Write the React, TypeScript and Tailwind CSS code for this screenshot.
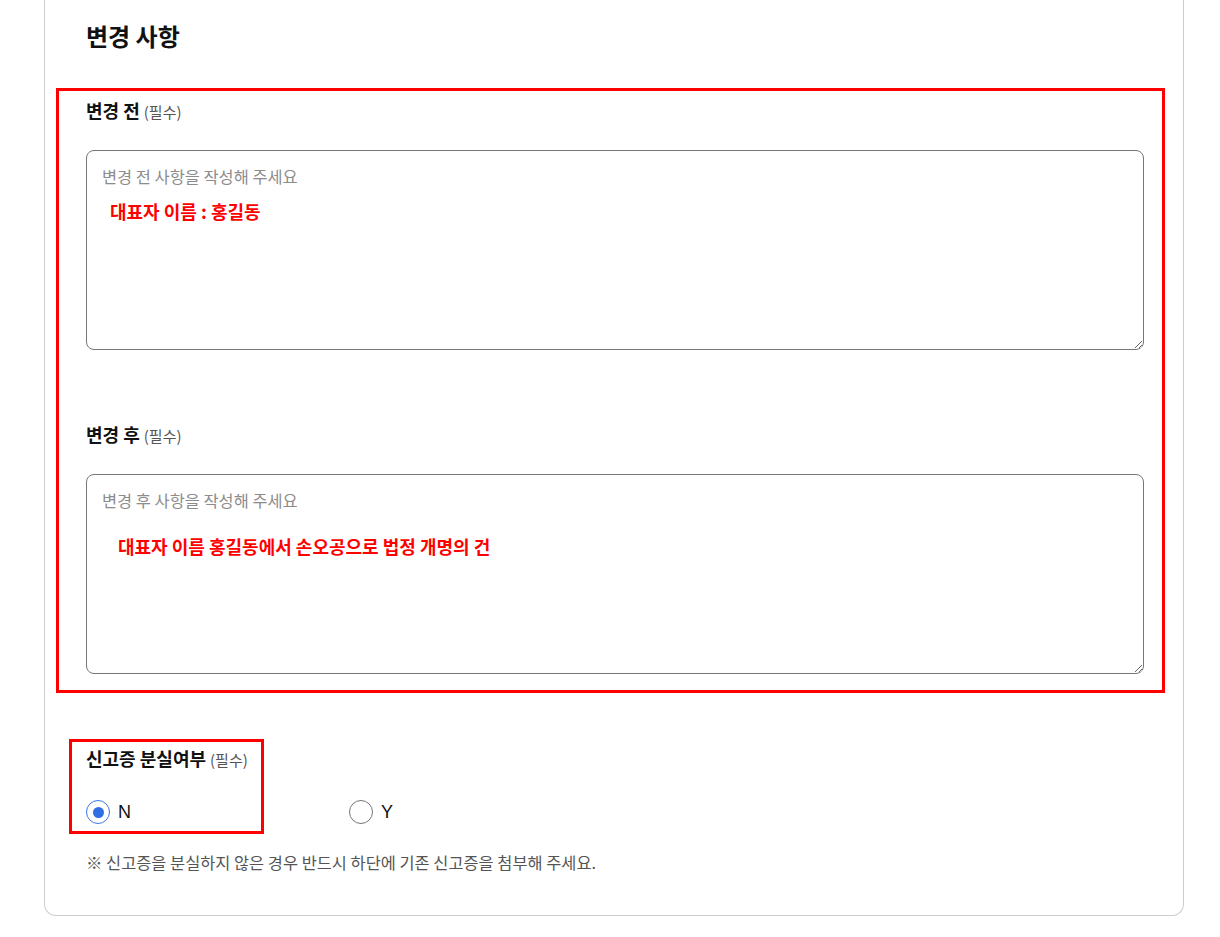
import React from 'react';

const fields = [
  {
    label: '변경 전',
    placeholder: '변경 전 사항을 작성해 주세요',
    note: '대표자 이름 : 홍길동',
    noteClass: 'left-[24px] top-[49px]',
  },
  {
    label: '변경 후',
    placeholder: '변경 후 사항을 작성해 주세요',
    note: '대표자 이름 홍길동에서 손오공으로 법정 개명의 건',
    noteClass: 'left-[32px] top-[60px]',
  },
];

function FieldLabel({ text }: { text: string }) {
  return (
    <div className="flex h-[24px] items-baseline gap-[4px] overflow-visible leading-[24px]">
      <span className="text-[18px] font-bold text-[#111]">{text}</span>
      <span className="text-[15px] text-[#555]">(필수)</span>
    </div>
  );
}

function Radio({ checked, label }: { checked?: boolean; label: string }) {
  return (
    <label className="flex h-[24px] items-center gap-[8px] cursor-pointer">
      <span
        className={`flex h-[24px] w-[24px] items-center justify-center rounded-full border-[1.5px] ${
          checked ? 'border-[#3a78e6]' : 'border-[#767676]'
        }`}
      >
        {checked && <span className="h-[11px] w-[11px] rounded-full bg-[#2f6fe4]" />}
      </span>
      <span className="font-['Liberation_Sans',sans-serif] text-[18px] leading-[24px] text-[#111]">{label}</span>
    </label>
  );
}

export default function App() {
  return (
    <div className="min-h-[937px] bg-white font-['Noto_Sans_CJK_KR','Noto_Sans',sans-serif]">
      <div className="ml-[44px] w-[1140px] rounded-b-[12px] border-x border-b border-[#cccccc] pl-[41px] pr-[39px] pt-[20px] pb-[42px]">
        <h2 className="h-[32px] text-[24px] font-bold leading-[32px] text-[#111]">변경 사항</h2>

        {/* 필수 입력 영역 */}
        <div className="-ml-[30px] -mr-[21px] mt-[36px] border-[3px] border-[#ff0000] pl-[27px] pr-[18px] pt-[7px] pb-[16px]">
          {fields.map((f, i) => (
            <div key={f.label} className={i > 0 ? 'mt-[72px]' : ''}>
              <FieldLabel text={f.label} />
              <div className="relative mt-[28px]">
                <textarea
                  placeholder={f.placeholder}
                  className="block h-[200px] w-full resize-y rounded-[8px] border border-[#767676] px-[15px] py-[14px] text-[16.4px] leading-[22px] text-[#111] outline-none placeholder:text-[#8c8c8c]"
                />
                <span
                  className={`pointer-events-none absolute ${f.noteClass} text-[18px] font-bold leading-[24px] text-[#ff0000]`}
                >
                  {f.note}
                </span>
              </div>
            </div>
          ))}
        </div>

        {/* 신고증 분실여부 */}
        <div className="relative mt-[53px]">
          <div className="pointer-events-none absolute -left-[17px] -top-[7px] h-[95px] w-[195px] border-[3px] border-[#ff0000]" />
          <FieldLabel text="신고증 분실여부" />
          <div className="mt-[30px] flex">
            <div className="w-[263px]">
              <Radio checked label="N" />
            </div>
            <Radio label="Y" />
          </div>
          <p className="mt-[27px] h-[22px] text-[16.4px] leading-[22px] text-[#555]">
            ※ 신고증을 분실하지 않은 경우 반드시 하단에 기존 신고증을 첨부해 주세요.
          </p>
        </div>
      </div>
    </div>
  );
}
